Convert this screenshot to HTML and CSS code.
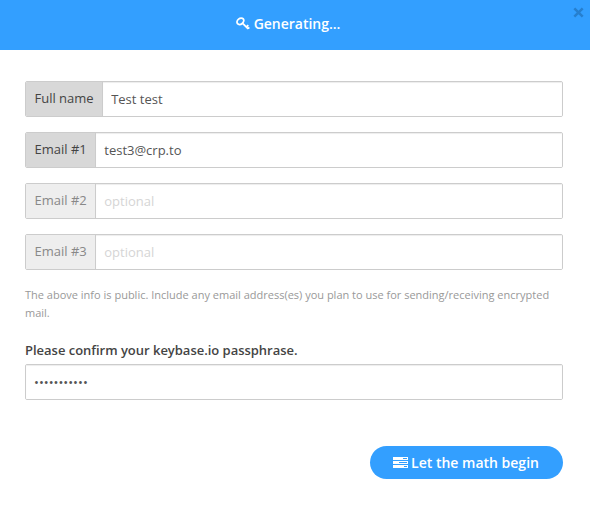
FILE: index.html
```html
<!DOCTYPE html>
<html lang="en">
<head>
<meta charset="utf-8">
<title>Generating...</title>
<link rel="stylesheet" href="styles.css">
</head>
<body>
<div class="modal">
  <header class="modal-header">
    <svg class="icon-key" viewBox="0 0 14 14" aria-hidden="true"><ellipse cx="4.4" cy="4.3" rx="3.7" ry="2.8" transform="rotate(-40 4.4 4.3)"/><path d="M6.4 6.2l5.8 5.6M10.4 10l1.9-1.9M12 11.6l1.3-1.3"/></svg>
    <h1 class="modal-title">Generating...</h1>
    <button class="close" type="button" aria-label="Close"><svg viewBox="0 0 10 10"><path d="M1.2 1.2l7.6 7.6M8.8 1.2L1.2 8.8"/></svg></button>
  </header>
  <form class="modal-body">
    <div class="input-group"><label class="addon" for="name">Full name</label><input id="name" type="text" value="Test test"></div>
    <div class="input-group"><label class="addon" for="email1">Email #1</label><input id="email1" type="text" value="test3@crp.to"></div>
    <div class="input-group"><label class="addon muted" for="email2">Email #2</label><input id="email2" type="text" placeholder="optional"></div>
    <div class="input-group"><label class="addon muted" for="email3">Email #3</label><input id="email3" type="text" placeholder="optional"></div>
    <p class="note">The above info is public. Include any email address(es) you plan to use for sending/receiving encrypted mail.</p>
    <label class="pass-label" for="pass">Please confirm your keybase.io passphrase.</label>
    <div class="input-group"><input id="pass" class="password" type="password" value="passphrase1"></div>
    <div class="actions">
      <button class="submit" type="button">
        <svg class="icon-tasks" viewBox="0 0 15 12" aria-hidden="true"><path class="bars" d="M0 0h15v3H0zM0 4h15v3H0zM0 8h15v3H0z"/><path class="slots" d="M10 1h4v1h-4zM6 5h8v1H6zM11 9h3v1h-3z"/></svg>
        <span>Let the math begin</span>
      </button>
    </div>
  </form>
</div>
</body>
</html>
```
FILE: styles.css
```css
* { box-sizing: border-box; }
body {
  margin: 0;
  background: #fff;
  color: #444;
  font: 13px/18px "Open Sans", sans-serif;
}
.modal { width: 590px; height: 506px; }
.modal-header {
  position: relative;
  display: flex;
  align-items: center;
  justify-content: center;
  height: 50px;
  padding-bottom: 3px;
  padding-right: 14px;
  background: #339fff;
  color: #fff;
}
.icon-key { width: 14px; height: 14px; margin-right: 4px; fill: none; stroke: #fff; stroke-width: 1.8; }
.modal-title { margin: 0; font-size: 14px; line-height: 20px; font-weight: 600; letter-spacing: -0.02px; }
.close {
  position: absolute;
  top: 7px;
  right: 6px;
  width: 11px;
  height: 11px;
  padding: 0;
  border: 0;
  background: none;
}
.close svg { display: block; width: 11px; height: 11px; fill: none; stroke: #267fcf; stroke-width: 2.3; }
.modal-body { padding: 31px 27px 0 25px; }
.input-group {
  display: flex;
  height: 36px;
  margin-bottom: 15px;
  border: 1px solid #ccc;
  border-radius: 2px;
  overflow: hidden;
}
.addon {
  flex: none;
  padding: 7px 8.5px 0;
  border-right: 1px solid #ccc;
  background: #d8d8d8;
  color: #444;
}
.addon.muted { background: #eee; color: #888; }
.input-group input {
  flex: 1;
  min-width: 0;
  padding: 0 8px;
  border: 0;
  outline: 0;
  background: #fff;
  box-shadow: inset 0 1px 1px rgba(0, 0, 0, .075);
  color: #555;
  font: inherit;
}
.input-group input::placeholder { color: #d5d5d5; opacity: 1; }
.note { margin: 16px 0 0; color: #999; font-size: 11px; line-height: 18px; }
.pass-label { display: block; margin: 19px 0 5px; font-weight: 600; line-height: 18px; letter-spacing: -0.02px; }
.actions { display: flex; justify-content: flex-end; margin-top: 46px; }
.submit {
  display: flex;
  align-items: center;
  justify-content: center;
  gap: 3px;
  width: 193px;
  height: 33px;
  padding: 0 1px 0 0;
  border: 0;
  border-radius: 17px;
  background: #339fff;
  color: #fff;
  font: 600 14px/20px "Open Sans", sans-serif;
}
.icon-tasks { width: 15px; height: 12px; }
.bars { fill: #fff; }
.slots { fill: #339fff; }
```
